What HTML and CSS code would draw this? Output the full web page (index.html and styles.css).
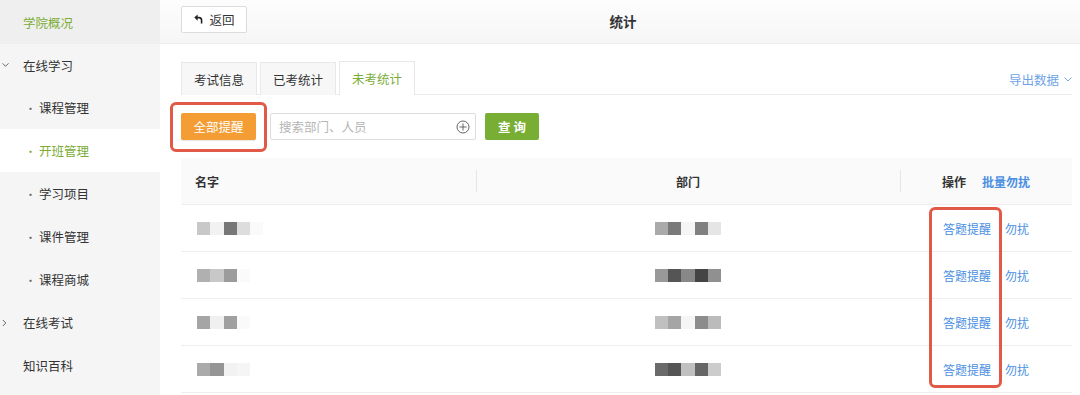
FILE: index.html
```html
<!DOCTYPE html>
<html lang="zh">
<head>
<meta charset="utf-8">
<link rel="stylesheet" href="styles.css">
</head>
<body>
<div class="app">
  <aside class="side">
    <div class="nav-item top active-top">学院概况</div>
    <div class="nav-item group"><span class="chev">
      <svg width="7" height="5" viewBox="0 0 7 5"><path d="M0.5 0.8 L3.5 3.8 L6.5 0.8" fill="none" stroke="#666" stroke-width="1"/></svg>
    </span>在线学习</div>
    <div class="nav-item sub"><span class="dot">·</span>课程管理</div>
    <div class="nav-item sub current"><span class="dot">·</span>开班管理</div>
    <div class="nav-item sub"><span class="dot">·</span>学习项目</div>
    <div class="nav-item sub"><span class="dot">·</span>课件管理</div>
    <div class="nav-item sub"><span class="dot">·</span>课程商城</div>
    <div class="nav-item group"><span class="chev">
      <svg width="5" height="7" viewBox="0 0 5 7"><path d="M0.8 0.5 L3.8 3.5 L0.8 6.5" fill="none" stroke="#666" stroke-width="1"/></svg>
    </span>在线考试</div>
    <div class="nav-item group">知识百科</div>
  </aside>
  <main class="main">
    <header class="topbar">
      <button class="back"><svg width="9" height="10" viewBox="0 0 9 10"><path d="M3.6 0.5 L0.3 3.6 L3.6 6.7 Z" fill="#222"/><path d="M3 3.6 H5 Q7.6 3.6 7.6 6.4 V9.5" fill="none" stroke="#222" stroke-width="1.6"/></svg>返回</button>
      <div class="title">统计</div>
    </header>
    <section class="content">
      <div class="tabs">
        <div class="tab">考试信息</div>
        <div class="tab">已考统计</div>
        <div class="tab active">未考统计</div>
        <div class="export">导出数据 <svg width="8" height="5" viewBox="0 0 8 5"><path d="M0.5 0.5 L4 4 L7.5 0.5" fill="none" stroke="#7aa8e6" stroke-width="1"/></svg></div>
      </div>
      <div class="toolbar">
        <div class="remind-wrap">
          <button class="btn-orange">全部提醒</button>
          <span class="mark mark-btn"></span>
        </div>
        <div class="search">
          <span class="ph">搜索部门、人员</span>
          <svg width="14" height="14" viewBox="0 0 14 14"><circle cx="7" cy="7" r="6" fill="none" stroke="#666" stroke-width="1"/><path d="M7 3.5 V10.5 M3.5 7 H10.5" stroke="#666" stroke-width="1"/></svg>
        </div>
        <button class="btn-green">查 询</button>
      </div>
      <div class="table">
        <div class="thead">
          <div class="c-name">名字</div>
          <div class="c-dept"><span class="sep"></span>部门</div>
          <div class="c-op"><span class="sep"></span>操作<span class="link bold">批量勿扰</span></div>
        </div>
        <div class="tbody">
          <div class="row">
            <div class="c-name"><div class="px"><i style="background:#c8c8c8"></i><i style="background:#f2f2f2"></i><i style="background:#777"></i><i style="background:#ddd"></i><i style="background:#fafafa"></i></div></div>
            <div class="c-dept"><div class="px"><i style="background:#aaa"></i><i style="background:#7a7a7a"></i><i style="background:#f5f5f5"></i><i style="background:#808080"></i><i style="background:#e5e5e5"></i></div></div>
            <div class="c-op"><span class="link">答题提醒</span><span class="link">勿扰</span></div>
          </div>
          <div class="row">
            <div class="c-name"><div class="px"><i style="background:#b0b0b0"></i><i style="background:#c8c8c8"></i><i style="background:#9c9c9c"></i><i style="background:#fafafa"></i></div></div>
            <div class="c-dept"><div class="px"><i style="background:#999"></i><i style="background:#555"></i><i style="background:#888"></i><i style="background:#444"></i><i style="background:#909090"></i></div></div>
            <div class="c-op"><span class="link">答题提醒</span><span class="link">勿扰</span></div>
          </div>
          <div class="row">
            <div class="c-name"><div class="px"><i style="background:#a5a5a5"></i><i style="background:#f0f0f0"></i><i style="background:#a0a0a0"></i><i style="background:#fafafa"></i></div></div>
            <div class="c-dept"><div class="px"><i style="background:#c0c0c0"></i><i style="background:#a5a5a5"></i><i style="background:#f5f5f5"></i><i style="background:#8c8c8c"></i><i style="background:#bbb"></i></div></div>
            <div class="c-op"><span class="link">答题提醒</span><span class="link">勿扰</span></div>
          </div>
          <div class="row">
            <div class="c-name"><div class="px"><i style="background:#aaa"></i><i style="background:#959595"></i><i style="background:#f2f2f2"></i><i style="background:#f5f5f5"></i></div></div>
            <div class="c-dept"><div class="px"><i style="background:#6a6a6a"></i><i style="background:#555"></i><i style="background:#c0c0c0"></i><i style="background:#666"></i><i style="background:#ccc"></i></div></div>
            <div class="c-op"><span class="link">答题提醒</span><span class="link">勿扰</span></div>
          </div>
          <span class="mark mark-col"></span>
        </div>
      </div>
    </section>
  </main>
</div>
</body>
</html>
```

FILE: styles.css
```css
* { box-sizing: border-box; }
html, body { margin: 0; padding: 0; }
body {
  width: 1080px; height: 395px; overflow: hidden;
  font-family: "Noto Sans CJK SC", "Noto Sans", sans-serif;
  font-size: 12px; color: #333; background: #fff;
}
.app { display: flex; height: 395px; }
.side { width: 160px; flex: none; background: #f5f5f5; }
.nav-item {
  height: 43px; display: flex; align-items: center;
  padding-left: 23px; position: relative; color: #333; font-size: 12.5px;
}
.nav-item.top { height: 44px; }
.nav-item.group:nth-child(2) { height: 42px; }
.active-top { background: #efefef; color: #7aad35; }
.nav-item.sub { padding-left: 25px; }
.nav-item.current { background: #fff; color: #7aad35; }
.dot { width: 14px; display: inline-block; color: #666; font-size: 11px; }
.current .dot { color: #7aad35; }
.chev { position: absolute; left: 2px; top: 50%; transform: translateY(-50%); display: flex; }

.main { flex: 1; display: flex; flex-direction: column; min-width: 0; }
.topbar {
  height: 44px; flex: none; display: flex; align-items: center;
  padding-left: 21px; position: relative;
  background: linear-gradient(#fdfdfd, #f6f6f6);
  border-bottom: 1px solid #ececec;
}
.back {
  height: 27px; width: 66px; margin-top: -5px;
  background: #fff; border: 1px solid #dcdcdc; border-radius: 2px;
  font: inherit; font-size: 12.5px; color: #333;
  display: flex; align-items: center; justify-content: center; gap: 6px; padding: 0 0 0 1px;
}
.title {
  position: absolute; left: 0; right: 0; top: 0; height: 44px;
  display: flex; align-items: center; justify-content: center;
  padding-left: 6px; padding-bottom: 2px;
  font-size: 13.5px; font-weight: 600; color: #333; pointer-events: none;
}
.content { padding: 18px 8px 0 21px; }
.tabs {
  display: flex; gap: 3px; height: 33px; align-items: flex-end;
  border-bottom: 1px solid #ececec; position: relative;
}
.tab {
  width: 76px; height: 33px; display: flex; align-items: center; justify-content: center;
  background: #f7f7f7; border: 1px solid #e8e8e8; border-bottom: none; color: #333;
  margin-bottom: -1px; font-size: 12.5px;
}
.tab.active { background: #fff; color: #7aad35; height: 34px; }
.export {
  margin-left: auto; align-self: center; color: #6ea3e8; display: flex; align-items: center; gap: 5px;
  margin-right: 0; padding-top: 2px; font-size: 12.5px;
}
.toolbar { display: flex; align-items: center; margin-top: 18px; height: 27px; }
.remind-wrap { position: relative; }
.btn-orange {
  width: 75px; height: 27px; border: none; border-radius: 2px; padding: 0;
  background: #f39d34; color: #fff; font: inherit; font-size: 12.5px;
  box-shadow: 0 1px 1px rgba(0,0,0,0.1); display: block;
}
.mark { position: absolute; border: 3px solid #e05a47; border-radius: 6px; pointer-events: none; }
.mark-btn { left: -11px; top: -11px; width: 97px; height: 50px; }
.search {
  margin-left: 14px; width: 206px; height: 27px; border: 1px solid #ddd; border-radius: 2px;
  display: flex; align-items: center; justify-content: space-between; padding: 0 5px 0 8px;
  background: #fff;
}
.ph { color: #b5b5b5; font-size: 12.5px; }
.btn-green {
  margin-left: 9px; width: 54px; height: 27px; border: none; border-radius: 2px; padding: 0;
  background: #79ae35; color: #fff; font: inherit; font-size: 12.5px; font-weight: 600;
}
.table { margin-top: 18px; }
.thead {
  display: flex; height: 47px; background: #fafafa; border-bottom: 1px solid #eee;
  font-weight: 600; align-items: center; font-size: 12px;
}
.c-name { width: 295px; padding-left: 14px; display: flex; align-items: center; height: 100%; }
.c-dept { width: 424px; display: flex; align-items: center; justify-content: center; height: 100%; position: relative; }
.c-op { flex: 1; display: flex; align-items: center; padding-left: 42px; gap: 16px; height: 100%; position: relative; }
.sep { position: absolute; left: 0; top: 12px; bottom: 12px; width: 1px; background: #e6e6e6; }
.link { color: #4a8fe2; font-weight: 400; font-size: 12px; }
.link.bold { font-weight: 600; }
.tbody { position: relative; }
.row { display: flex; height: 47px; border-bottom: 1px solid #eee; }
.row .c-name { padding-left: 16px; }
.row .c-op { padding-left: 43px; gap: 14px; }
.px { display: flex; }
.px i { display: block; width: 13.3px; height: 13px; }
.mark-col { left: 748px; top: 2px; width: 73px; height: 181px; }
```
